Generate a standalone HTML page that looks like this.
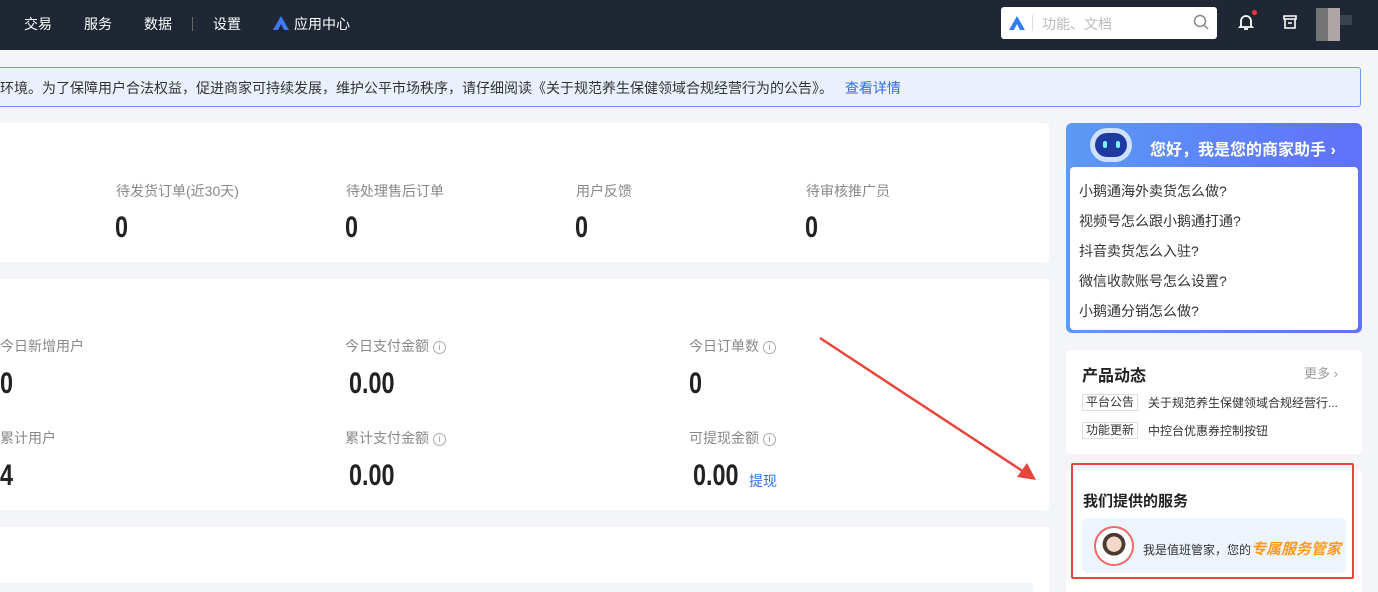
<!DOCTYPE html>
<html><head><meta charset="utf-8"><style>
*{margin:0;padding:0;box-sizing:border-box}
html,body{width:1378px;height:592px;overflow:hidden}
body{background:#f4f5f8;font-family:"Liberation Sans","Noto Sans CJK SC",sans-serif;position:relative;color:#333}
.a{position:absolute;white-space:nowrap}
.nav{left:0;top:0;width:1378px;height:50px;background:#1f2735}
.nv{color:#fff;font-size:14px;top:14px}
.card{background:#fff;border-radius:4px}
.lb{color:#888;font-size:14px}
.num{font-family:"Liberation Sans",sans-serif;font-weight:bold;font-size:30px;color:#222;transform:scaleX(.78);transform-origin:0 0;line-height:34px}
.i{display:inline-block;width:13px;height:13px;border:1px solid #aaa;border-radius:50%;font-size:9px;line-height:11px;text-align:center;color:#999;vertical-align:1px;margin-left:4px}
.q{font-size:14px;color:#333;left:1079px}
.tag{border:1px solid #ddd;font-size:12px;padding:0 3px;line-height:15px;color:#333}
</style></head><body>
<div class="a nav"></div>
<div class="a nv" style="left:24px">交易</div>
<div class="a nv" style="left:84px">服务</div>
<div class="a nv" style="left:144px">数据</div>
<div class="a" style="left:192px;top:17px;width:1px;height:14px;background:#666"></div>
<div class="a nv" style="left:213px">设置</div>
<svg class="a" style="left:273px;top:16px" width="16" height="14" viewBox="0 0 16 14"><path d="M8 0L0 14h5L8 8l3 6h5z" fill="#3a7bff"/></svg>
<div class="a nv" style="left:294px">应用中心</div>
<div class="a" style="left:1001px;top:7px;width:216px;height:32px;background:#fff;border-radius:3px"></div>
<svg class="a" style="left:1009px;top:16px" width="16" height="14" viewBox="0 0 16 14"><path d="M8 0L0 14h5L8 8l3 6h5z" fill="#2f7cf6"/></svg>
<div class="a" style="left:1032px;top:15px;width:1px;height:16px;background:#ddd"></div>
<div class="a" style="left:1042px;top:14px;font-size:14px;color:#bbb">功能、文档</div>
<svg class="a" style="left:1193px;top:14px" width="16" height="16" viewBox="0 0 16 16"><circle cx="7" cy="7" r="5.5" stroke="#888" stroke-width="1.5" fill="none"/><path d="M11 11l4 4" stroke="#888" stroke-width="1.5"/></svg>
<svg class="a" style="left:1238px;top:13px" width="16" height="18" viewBox="0 0 16 18"><path d="M3 13V8a5 5 0 0110 0v5l1 1H2z" stroke="#fff" stroke-width="1.8" fill="none"/><path d="M6 16h4" stroke="#fff" stroke-width="1.8"/></svg>
<div class="a" style="left:1252px;top:10px;width:5px;height:5px;border-radius:50%;background:#f33"></div>
<svg class="a" style="left:1283px;top:15px" width="14" height="14" viewBox="0 0 14 14"><path d="M1 1h12v3H1zM2 4v9h10V4M5 8h4" stroke="#fff" stroke-width="1.6" fill="none"/></svg>
<div class="a" style="left:1316px;top:8px;width:24px;height:33px;background:linear-gradient(90deg,#888 0,#8a8480 50%,#d0c6c0 50%);opacity:.8"></div>
<div class="a" style="left:1340px;top:15px;width:12px;height:10px;background:#3a4250"></div>

<div class="a" style="left:-5px;top:67px;width:1366px;height:40px;background:#eaf0fd;border:1px solid #6b9af0;border-radius:3px"></div>
<div class="a" style="left:0;top:78px;font-size:14px;color:#333">环境。为了保障用户合法权益，促进商家可持续发展，维护公平市场秩序，请仔细阅读《关于规范养生保健领域合规经营行为的公告》。 <span style="color:#2f6ef0;margin-left:8px">查看详情</span></div>

<div class="a card" style="left:-5px;top:123px;width:1054px;height:139px"></div>
<div class="a lb" style="left:116px;top:181px">待发货订单(近30天)</div>
<div class="a lb" style="left:346px;top:181px">待处理售后订单</div>
<div class="a lb" style="left:576px;top:181px">用户反馈</div>
<div class="a lb" style="left:806px;top:181px">待审核推广员</div>
<div class="a num" style="left:115px;top:211px">0</div>
<div class="a num" style="left:345px;top:211px">0</div>
<div class="a num" style="left:575px;top:211px">0</div>
<div class="a num" style="left:805px;top:211px">0</div>

<div class="a card" style="left:-5px;top:279px;width:1054px;height:231px"></div>
<div class="a lb" style="left:0;top:336px">今日新增用户</div>
<div class="a lb" style="left:345px;top:336px">今日支付金额<span class="i">i</span></div>
<div class="a lb" style="left:689px;top:336px">今日订单数<span class="i">i</span></div>
<div class="a num" style="left:0;top:367px">0</div>
<div class="a num" style="left:349px;top:367px">0.00</div>
<div class="a num" style="left:689px;top:367px">0</div>
<div class="a lb" style="left:0;top:428px">累计用户</div>
<div class="a lb" style="left:345px;top:428px">累计支付金额<span class="i">i</span></div>
<div class="a lb" style="left:689px;top:428px">可提现金额<span class="i">i</span></div>
<div class="a num" style="left:0;top:459px">4</div>
<div class="a num" style="left:349px;top:459px">0.00</div>
<div class="a num" style="left:693px;top:459px">0.00</div>
<div class="a" style="left:749px;top:471px;font-size:14px;color:#2f6ef0">提现</div>

<div class="a card" style="left:-5px;top:527px;width:1054px;height:70px"></div>
<div class="a" style="left:0;top:583px;width:1033px;height:10px;background:#f4f5f8"></div>

<svg class="a" style="left:0;top:0" width="1378" height="592"><path d="M820 338L1024 472" stroke="#e8453c" stroke-width="2.5"/><path d="M1036 480L1017 477L1027 463z" fill="#e8453c"/></svg>

<div class="a" style="left:1066px;top:123px;width:296px;height:210px;border-radius:6px;background:linear-gradient(90deg,#5b9af5,#6070fb)"></div>
<div class="a" style="left:1090px;top:128px;width:42px;height:34px;border-radius:17px;background:#cfe0ff"></div>
<div class="a" style="left:1095px;top:133px;width:32px;height:24px;border-radius:12px;background:#1e3aa0"></div>
<div class="a" style="left:1103px;top:141px;width:4px;height:7px;border-radius:2px;background:#7ff"></div>
<div class="a" style="left:1116px;top:141px;width:4px;height:7px;border-radius:2px;background:#7ff"></div>
<div class="a" style="left:1150px;top:136px;font-size:16px;font-weight:bold;color:#fff">您好，我是您的商家助手 ›</div>
<div class="a" style="left:1070px;top:167px;width:288px;height:163px;background:#fff;border-radius:4px"></div>
<div class="a q" style="top:181px">小鹅通海外卖货怎么做?</div>
<div class="a q" style="top:211px">视频号怎么跟小鹅通打通?</div>
<div class="a q" style="top:241px">抖音卖货怎么入驻?</div>
<div class="a q" style="top:271px">微信收款账号怎么设置?</div>
<div class="a q" style="top:301px">小鹅通分销怎么做?</div>

<div class="a card" style="left:1066px;top:350px;width:296px;height:104px"></div>
<div class="a" style="left:1082px;top:362px;font-size:16px;font-weight:bold;color:#222">产品动态</div>
<div class="a" style="left:1304px;top:363px;font-size:13px;color:#999">更多 ›</div>
<div class="a tag" style="left:1082px;top:394px">平台公告</div>
<div class="a" style="left:1148px;top:394px;font-size:12px;color:#333">关于规范养生保健领域合规经营行...</div>
<div class="a tag" style="left:1082px;top:422px">功能更新</div>
<div class="a" style="left:1148px;top:422px;font-size:12px;color:#333">中控台优惠券控制按钮</div>

<div class="a card" style="left:1066px;top:470px;width:296px;height:130px"></div>
<div class="a" style="left:1071px;top:463px;width:283px;height:116px;border:2px solid #e8453c;border-radius:2px"></div>
<div class="a" style="left:1083px;top:490px;font-size:15px;font-weight:bold;color:#222">我们提供的服务</div>
<div class="a" style="left:1082px;top:518px;width:264px;height:55px;border-radius:6px;background:#edf4fd"></div>
<div class="a" style="left:1094px;top:526px;width:40px;height:40px;border-radius:50%;border:2px solid #f06868;background:radial-gradient(circle at 50% 45%,#f3d8c8 0 28%,#4a3a30 29% 42%,#fff 43%)"></div>
<div class="a" style="left:1143px;top:538px;font-size:12px;color:#333">我是值班管家，您的<span style="color:#ff9a1a;font-weight:bold;font-style:italic;font-size:15px">专属服务管家</span></div>
</body></html>
